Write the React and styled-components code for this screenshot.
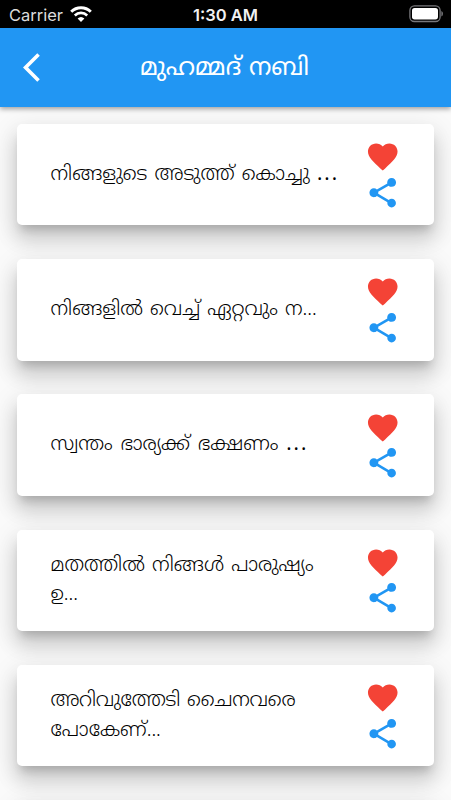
import React from "react";
import styled, { createGlobalStyle } from "styled-components";

const GlobalStyle = createGlobalStyle`
  * {
    box-sizing: border-box;
  }
  body {
    margin: 0;
    overflow: hidden;
    background: #fafafa;
  }
`;

const Screen = styled.div`
  display: flex;
  flex-direction: column;
  width: 451px;
  height: 800px;
  overflow: hidden;
  background: #fafafa;
  font-family: "Noto Sans Malayalam", "Manjari", "Noto Sans", sans-serif;
`;

const StatusBar = styled.div`
  display: grid;
  grid-template-columns: 1fr auto 1fr;
  align-items: center;
  flex: none;
  height: 28px;
  padding: 0 7px 0 9px;
  background: #000;
  color: #f2f2f2;
  font-family: Inter, sans-serif;
  font-size: 16.5px;
`;

const Carrier = styled.div`
  display: flex;
  align-items: center;
  gap: 7px;
  padding-top: 1px;
  color: #dcdcdc;
`;

const Clock = styled.div`
  padding: 1px 2px 0 0;
  font-weight: 600;
`;

const BatteryFrame = styled.div`
  display: flex;
  justify-content: flex-end;
`;

const Header = styled.header`
  display: grid;
  grid-template-columns: 60px 1fr 60px;
  align-items: center;
  flex: none;
  z-index: 1;
  height: 79px;
  background: #2196f3;
  box-shadow: 0 2px 5px rgba(0, 0, 0, 0.36);
`;

const BackBtn = styled.button`
  display: flex;
  padding: 0 0 0 22.5px;
  border: 0;
  background: none;
`;

const Title = styled.h1`
  display: flex;
  justify-content: center;
  margin: 0;
  padding: 2px 2px 0 0;
  color: #fff;
  font-size: 24.6px;
  font-weight: 400;
  white-space: nowrap;
`;

const List = styled.main`
  display: flex;
  flex-direction: column;
  gap: 33.8px;
  padding: 16.8px 17px 0;
`;

const Card = styled.article`
  display: flex;
  align-items: center;
  justify-content: space-between;
  flex: none;
  height: 101.5px;
  padding: 0 33.5px;
  border-radius: 5px;
  background: #fff;
  box-shadow: 0 8px 9px -4px rgba(0, 0, 0, 0.16),
    0 15px 20px 1px rgba(0, 0, 0, 0.14), 0 7px 26px 3px rgba(0, 0, 0, 0.09);
`;

const Quote = styled.div`
  padding-top: 2px;
  color: #000;
  font-size: 20px;
  font-weight: 300;
  line-height: 29.5px;
`;

const Line = styled.div`
  letter-spacing: ${props => props.$tracking || 0}px;
  word-spacing: ${props => props.$gap || 0}px;
  white-space: nowrap;
`;

const Dots = styled.span`
  font-weight: ${props => (props.$wide ? 400 : 300)};
  letter-spacing: ${props => (props.$wide ? 2 : 0)}px;
`;

const Actions = styled.div`
  display: flex;
  flex-direction: column;
`;

const ActionIcon = styled.svg`
  display: block;
  width: 35.5px;
  height: 35.5px;
  fill: ${props => props.$color};
`;

const quotes = [
  [{ text: "നിങ്ങളുടെ അടുത്ത് കൊച്ചു ", gap: 1, dots: true, wide: true }],
  [{ text: "നിങ്ങളിൽ വെച്ച് ഏറ്റവും ന", gap: 0.8, dots: true }],
  [{ text: "സ്വന്തം ഭാര്യക്ക് ഭക്ഷണം ", gap: 1.6, dots: true, wide: true }],
  [{ text: "മതത്തിൽ നിങ്ങൾ പാരുഷ്യം", gap: 1 }, { text: "ഉ", dots: true }],
  [
    { text: "അറിവുത്തേടി ചൈനവരെ", gap: 1, tracking: -0.3 },
    { text: "പോകേണ്", dots: true }
  ],
  []
];

const Wifi = () => (
  <svg width="22" height="17" viewBox="0 0 22 17" fill="none" stroke="#fff">
    <path d="M1.2 5.7a14 14 0 0 1 19.6 0" strokeWidth="3" />
    <path d="M4.8 9.4a9 9 0 0 1 12.4 0" strokeWidth="2.7" />
    <path d="M11 16 7.6 12.6a5 5 0 0 1 6.8 0z" fill="#fff" stroke="none" />
  </svg>
);

const Battery = () => (
  <svg width="35" height="18" viewBox="0 0 35 18" fill="none">
    <rect x="0.9" y="0.9" width="30.2" height="15.6" rx="4.5" stroke="#77777b" strokeWidth="1.3" />
    <rect x="3" y="3" width="26" height="11.4" rx="2.6" fill="#fff" />
    <path d="M32.4 6v5.6q1.6-.8 1.6-2.8T32.4 6z" fill="#77777b" />
  </svg>
);

const App = () => {
  return (
    <>
      <GlobalStyle />
      <Screen>
        <StatusBar>
          <Carrier>
            Carrier
            <Wifi />
          </Carrier>
          <Clock>1:30 AM</Clock>
          <BatteryFrame>
            <Battery />
          </BatteryFrame>
        </StatusBar>
        <Header>
          <BackBtn aria-label="Back">
            <svg width="17" height="29" viewBox="0 2 11.8 20.1" fill="#fff">
              <path d="M11.67 3.87 9.9 2.1 0 12l9.9 9.9 1.77-1.77L3.54 12z" />
            </svg>
          </BackBtn>
          <Title>മുഹമ്മദ് നബി</Title>
        </Header>
        <List>
          {quotes.map((lines, index) => (
            <Card key={index}>
              <Quote>
                {lines.map(line => (
                  <Line key={line.text} $gap={line.gap} $tracking={line.tracking}>
                    {line.text}
                    {line.dots && <Dots $wide={line.wide}>...</Dots>}
                  </Line>
                ))}
              </Quote>
              <Actions>
                <ActionIcon viewBox="0 0 24 24" $color="#f44336">
                  <path d="M12 21.35l-1.45-1.32C5.4 15.36 2 12.28 2 8.5 2 5.42 4.42 3 7.5 3c1.74 0 3.41.81 4.5 2.09C13.09 3.81 14.76 3 16.5 3 19.58 3 22 5.42 22 8.5c0 3.78-3.4 6.86-8.55 11.54L12 21.35z" />
                </ActionIcon>
                <ActionIcon viewBox="0 0 24 24" $color="#2196f3">
                  <path d="M18 16.08c-.76 0-1.44.3-1.96.77L8.91 12.7c.05-.23.09-.46.09-.7s-.04-.47-.09-.7l7.05-4.11c.54.5 1.25.81 2.04.81 1.66 0 3-1.34 3-3s-1.34-3-3-3-3 1.34-3 3c0 .24.04.47.09.7L8.04 9.81C7.5 9.31 6.79 9 6 9c-1.66 0-3 1.34-3 3s1.34 3 3 3c.79 0 1.5-.31 2.04-.81l7.12 4.16c-.05.21-.08.43-.08.65 0 1.61 1.31 2.92 2.92 2.92s2.92-1.31 2.92-2.92-1.31-2.92-2.92-2.92z" />
                </ActionIcon>
              </Actions>
            </Card>
          ))}
        </List>
      </Screen>
    </>
  );
};

export default App;
